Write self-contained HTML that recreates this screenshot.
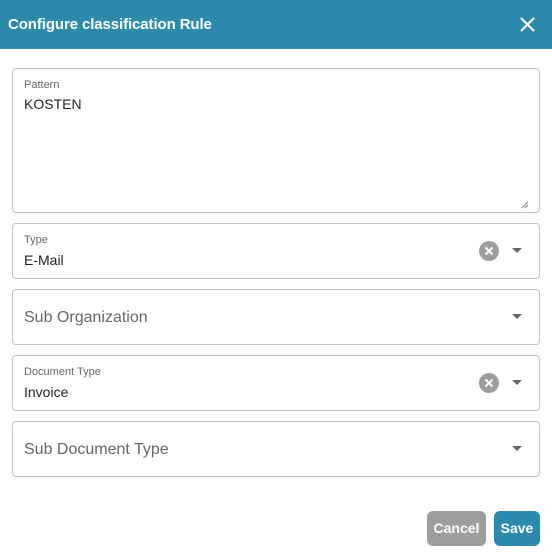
<!DOCTYPE html>
<html><head><style>
*{box-sizing:border-box;margin:0;padding:0}
body{width:552px;height:553px;background:#fff;font-family:"Liberation Sans",sans-serif;position:relative;overflow:hidden}
.hdr{position:absolute;left:0;top:0;width:552px;height:49px;background:#2d8aad;color:#fff;font-weight:bold;font-size:15px;letter-spacing:-0.1px;line-height:49px;padding-left:8px}
.x{position:absolute;right:16px;top:16px}
.f{position:absolute;left:12px;width:528px;border:1px solid #c4c4c4;border-radius:4px}
.lbl{position:absolute;left:11px;font-size:11px;color:#666}
.val{position:absolute;left:11px;font-size:14px;color:#222}
.ph{position:absolute;left:11px;font-size:16px;color:#666;top:19px}
.arr{position:absolute;right:17px;top:24px;width:0;height:0;border-left:5px solid transparent;border-right:5px solid transparent;border-top:5px solid #666}
.clr{position:absolute;right:40px;top:17px;width:20px;height:20px;border-radius:50%;background:#9e9e9e}
.btn{position:absolute;top:511px;height:35px;border-radius:6px;color:#fff;font-weight:bold;font-size:14px;line-height:35px;text-align:center}
</style></head><body>
<div class="hdr">Configure classification Rule
<svg class="x" width="17" height="17" viewBox="0 0 17 17"><path d="M2 2L15 15M15 2L2 15" stroke="#fff" stroke-width="2"/></svg></div>
<div class="f" style="top:68px;height:145px"><div class="lbl" style="top:10px">Pattern</div><div class="val" style="top:27px">KOSTEN</div>
<svg style="position:absolute;right:10px;bottom:3px" width="8" height="8"><path d="M1 7L7 1M4 7L7 4" stroke="#888" stroke-width="1"/></svg></div>
<div class="f" style="top:223px;height:56px"><div class="lbl" style="top:10px">Type</div><div class="val" style="top:28px">E-Mail</div>
<div class="clr"><svg width="20" height="20"><path d="M6.5 6.5L13.5 13.5M13.5 6.5L6.5 13.5" stroke="#fff" stroke-width="2"/></svg></div><div class="arr"></div></div>
<div class="f" style="top:289px;height:56px"><div class="ph">Sub Organization</div><div class="arr"></div></div>
<div class="f" style="top:355px;height:56px"><div class="lbl" style="top:10px">Document Type</div><div class="val" style="top:28px">Invoice</div>
<div class="clr"><svg width="20" height="20"><path d="M6.5 6.5L13.5 13.5M13.5 6.5L6.5 13.5" stroke="#fff" stroke-width="2"/></svg></div><div class="arr"></div></div>
<div class="f" style="top:421px;height:56px"><div class="ph">Sub Document Type</div><div class="arr"></div></div>
<div class="btn" style="left:427px;width:59px;background:#9e9e9e">Cancel</div>
<div class="btn" style="left:494px;width:46px;background:#2d8aad">Save</div>
</body></html>
